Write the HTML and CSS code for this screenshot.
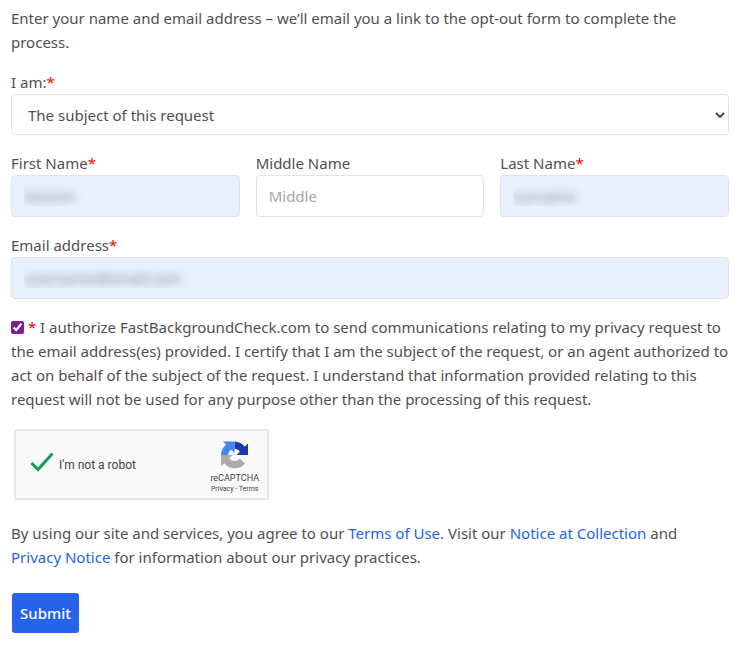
FILE: index.html
```
<!DOCTYPE html>
<html lang="en">
<head>
    <meta charset="UTF-8">
    <meta name="viewport" content="width=device-width, initial-scale=1.0">
    <title>Opt-Out Request - FastBackgroundCheck.com</title>
    <link rel="stylesheet" href="styles.css">
</head>
<body>
    <form class="optout-form">
        <p class="intro">Enter your name and email address – we’ll email you a link to the opt-out form to complete the process.</p>

        <div class="field">
            <label for="relation">I am:<span class="required">*</span></label>
            <div class="select-wrap">
                <select id="relation" class="input select">
                    <option>The subject of this request</option>
                    <option>An authorized agent</option>
                </select>
                <svg class="chevron" viewBox="0 0 10 6" aria-hidden="true"><path d="M1 1l4 4 4-4"/></svg>
            </div>
        </div>

        <div class="name-row">
            <div class="field">
                <label for="first-name">First Name<span class="required">*</span></label>
                <input type="text" id="first-name" class="input filled" value="forenm">
            </div>
            <div class="field">
                <label for="middle-name">Middle Name</label>
                <input type="text" id="middle-name" class="input" placeholder="Middle">
            </div>
            <div class="field">
                <label for="last-name">Last Name<span class="required">*</span></label>
                <input type="text" id="last-name" class="input filled" value="surname">
            </div>
        </div>

        <div class="field">
            <label for="email">Email address<span class="required">*</span></label>
            <input type="email" id="email" class="input filled" value="username@email.com">
        </div>

        <p class="consent">
            <input type="checkbox" id="authorize" class="checkbox" checked>
            <label for="authorize"><span class="required">*</span> I authorize FastBackgroundCheck.com to send communications relating to my privacy request to the email address(es) provided. I certify that I am the subject of the request, or an agent authorized to act on behalf of the subject of the request. I understand that information provided relating to this request will not be used for any purpose other than the processing of this request.</label>
        </p>

        <div class="captcha">
            <svg class="captcha-check" viewBox="0 0 24 20" aria-hidden="true"><path d="M1.5 11l6.500 6.500L22.500 1.500"/></svg>
            <span class="captcha-text">I'm not a robot</span>
            <div class="captcha-brand">
                <svg class="captcha-logo" viewBox="0 0 64 64" aria-hidden="true">
                    <path fill="#1c3aa9" d="M64 32V5l-7.500 7.500A32 32 0 0 0 32 0v17a15 15 0 0 1 12.500 7.500L37 32z"/>
                    <path fill="#4285f4" d="M32 0H5l7.500 7.500A32 32 0 0 0 0 32h17a15 15 0 0 1 7.500-12.500L32 27z"/>
                    <path fill="#ababab" d="M0 32v27l7.500-7.500A32 32 0 0 0 57 52L44.500 40A15 15 0 0 1 19.500 39.500L27 32z"/>
                </svg>
                <span class="captcha-name">reCAPTCHA</span>
                <span class="captcha-links"><a href="#">Privacy</a> - <a href="#">Terms</a></span>
            </div>
        </div>

        <p class="terms">By using our site and services, you agree to our <a href="#">Terms of Use</a>. Visit our <a href="#">Notice at Collection</a> and <a href="#">Privacy Notice</a> for information about our privacy practices.</p>

        <button type="submit" class="button">Submit</button>
    </form>
</body>
</html>
```
FILE: styles.css
```
* {
    box-sizing: border-box;
}
body {
    margin: 0;
    font-family: "Segoe UI", "Noto Sans", sans-serif;
    font-size: 15px;
    line-height: 24px;
    color: #505050;
    background-color: white;
}
.optout-form {
    display: flex;
    flex-direction: column;
    gap: 16px;
    padding: 6px 23px 32px 11px;
}
p {
    margin: 0;
}
a {
    color: #2563eb;
    text-decoration: none;
}
.required {
    color: #ff0000;
}
.field {
    display: flex;
    flex-direction: column;
    min-width: 0;
}
.name-row {
    display: grid;
    grid-template-columns: repeat(3, 1fr);
    gap: 16px;
}
.input {
    width: 100%;
    height: 42px;
    padding: 8px 12px;
    border: 1px solid #e2e2e2;
    border-radius: 4px;
    background-color: white;
    color: #505050;
    font: inherit;
}
.input::placeholder {
    color: #a5a5a5;
}
.input.filled {
    background-color: #e8f0fe;
    color: transparent;
    text-shadow: 0 0 8px rgba(74, 74, 74, 0.6);
}
.select-wrap {
    display: grid;
    align-items: center;
}
.select-wrap > * {
    grid-area: 1 / 1;
}
.select {
    height: 41px;
    padding: 0 16px;
    appearance: none;
}
.chevron {
    justify-self: end;
    width: 10px;
    height: 6px;
    margin-right: 4px;
    fill: none;
    stroke: #4a4a4a;
    stroke-width: 2;
    pointer-events: none;
}
.checkbox {
    width: 13px;
    height: 13px;
    margin: 0;
    vertical-align: -1px;
    accent-color: #871b97;
}

/* captcha */
.captcha {
    display: flex;
    align-items: center;
    width: 255px;
    height: 71px;
    margin: 2px 3px 5px;
    padding: 0 8px 0 14px;
    border: 2px solid #e6e8e7;
    border-radius: 2px;
    background-color: #f9f9f9;
    font-family: Roboto, sans-serif;
    color: #444;
}
.captcha-check {
    width: 24px;
    height: 20px;
    margin: 0 5px 6px 0;
    fill: none;
    stroke: #0f9d58;
    stroke-width: 3;
}
.captcha-text {
    font-size: 12px;
}
.captcha-brand {
    display: flex;
    flex-direction: column;
    align-items: center;
    margin-left: auto;
    padding-top: 6px;
    line-height: 11px;
}
.captcha-logo {
    width: 27px;
    height: 28px;
    margin-bottom: 4px;
}
.captcha-name {
    font-size: 9px;
}
.captcha-links {
    font-size: 7px;
}
.captcha-links a {
    color: inherit;
}

.terms {
    padding-right: 32px;
}
.button {
    align-self: flex-start;
    height: 40px;
    margin: 8px 1px;
    padding: 0 8px;
    border: none;
    border-radius: 3px;
    background-color: #2563eb;
    color: white;
    font: inherit;
    font-weight: 500;
    cursor: pointer;
}
.button:hover {
    background-color: #1d4ed8;
}
```
